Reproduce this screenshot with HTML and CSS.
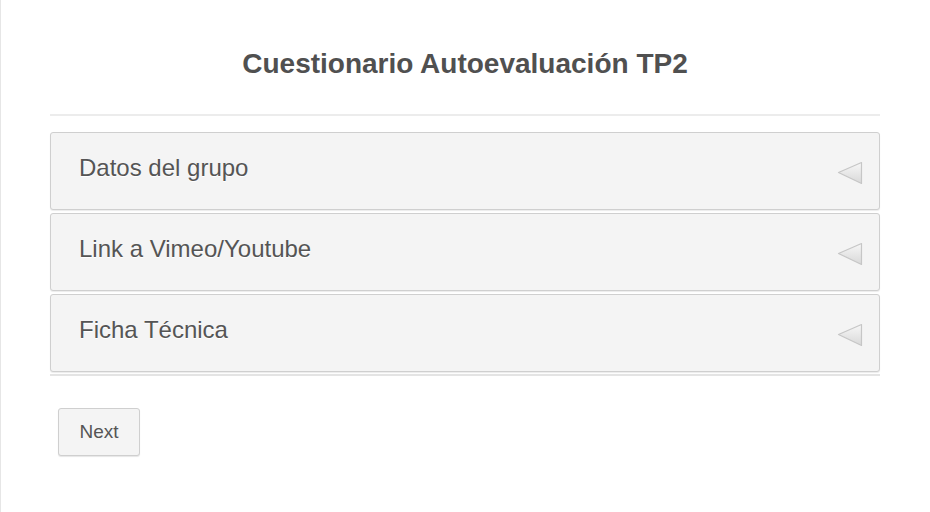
FILE: index.html
```html
<!DOCTYPE html>
<html lang="es">
<head>
<meta charset="utf-8">
<title>Cuestionario Autoevaluación TP2</title>
<link rel="stylesheet" href="styles.css">
</head>
<body>
<div class="page">
  <div class="container">
    <h1 class="title">Cuestionario Autoevaluación TP2</h1>
    <div class="sections">
      <div class="panel"><span class="label">Datos del grupo</span><svg class="arrow" width="28" height="26" viewBox="0 0 28 26"><defs><linearGradient id="g1" x1="0" y1="0" x2="0" y2="1"><stop offset="0" stop-color="#f7f7f7"/><stop offset="1" stop-color="#d8d8d8"/></linearGradient></defs><path d="M2.5 12.5 L25.5 2.5 L25.5 23.5 Z" fill="url(#g1)" stroke="#c6c6c6" stroke-width="1.2" stroke-linejoin="round"/></svg></div>
      <div class="panel"><span class="label">Link a Vimeo/Youtube</span><svg class="arrow" width="28" height="26" viewBox="0 0 28 26"><path d="M2.5 12.5 L25.5 2.5 L25.5 23.5 Z" fill="url(#g1)" stroke="#c6c6c6" stroke-width="1.2" stroke-linejoin="round"/></svg></div>
      <div class="panel"><span class="label">Ficha Técnica</span><svg class="arrow" width="28" height="26" viewBox="0 0 28 26"><path d="M2.5 12.5 L25.5 2.5 L25.5 23.5 Z" fill="url(#g1)" stroke="#c6c6c6" stroke-width="1.2" stroke-linejoin="round"/></svg></div>
    </div>
    <div class="actions">
      <button class="btn" type="button">Next</button>
    </div>
  </div>
</div>
</body>
</html>
```
FILE: styles.css
```css
html, body {
  margin: 0;
  padding: 0;
  background: #fff;
}
body {
  font-family: "Liberation Sans", Arial, sans-serif;
  color: #555;
}
.page {
  min-height: 512px;
  border-left: 1px solid #e6e6e6;
  box-sizing: border-box;
}
.container {
  margin-left: 49px;
  width: 830px;
}
.title {
  margin: 0;
  padding-top: 47px;
  padding-bottom: 34px;
  font-size: 28px;
  line-height: 33px;
  font-weight: bold;
  text-align: center;
  color: #505050;
  border-bottom: 2px solid #ececec;
}
.sections {
  margin-top: 16px;
  display: flex;
  flex-direction: column;
  gap: 3px;
  padding-bottom: 2px;
  border-bottom: 2px solid #e4e4e4;
}
.panel {
  height: 78px;
  box-sizing: border-box;
  border: 1px solid #cfcfcf;
  border-radius: 3px;
  background: #f4f4f4;
  box-shadow: 0 1px 1px rgba(0,0,0,0.08);
  display: flex;
  align-items: center;
  justify-content: space-between;
  padding: 0 15px 0 28px;
}
.label {
  font-size: 24px;
  color: #555;
  text-shadow: 0 1px 0 #fff;
  margin-top: -7px;
}
.arrow {
  display: block;
  margin-top: 4px;
}
.actions {
  padding: 32px 0 0 8px;
}
.btn {
  width: 82px;
  height: 48px;
  box-sizing: border-box;
  border: 1px solid #cfcfcf;
  border-radius: 3px;
  background: #f4f4f4;
  box-shadow: 0 1px 1px rgba(0,0,0,0.1);
  font-family: "Liberation Sans", Arial, sans-serif;
  font-size: 19px;
  color: #555;
  padding: 0;
}
```
